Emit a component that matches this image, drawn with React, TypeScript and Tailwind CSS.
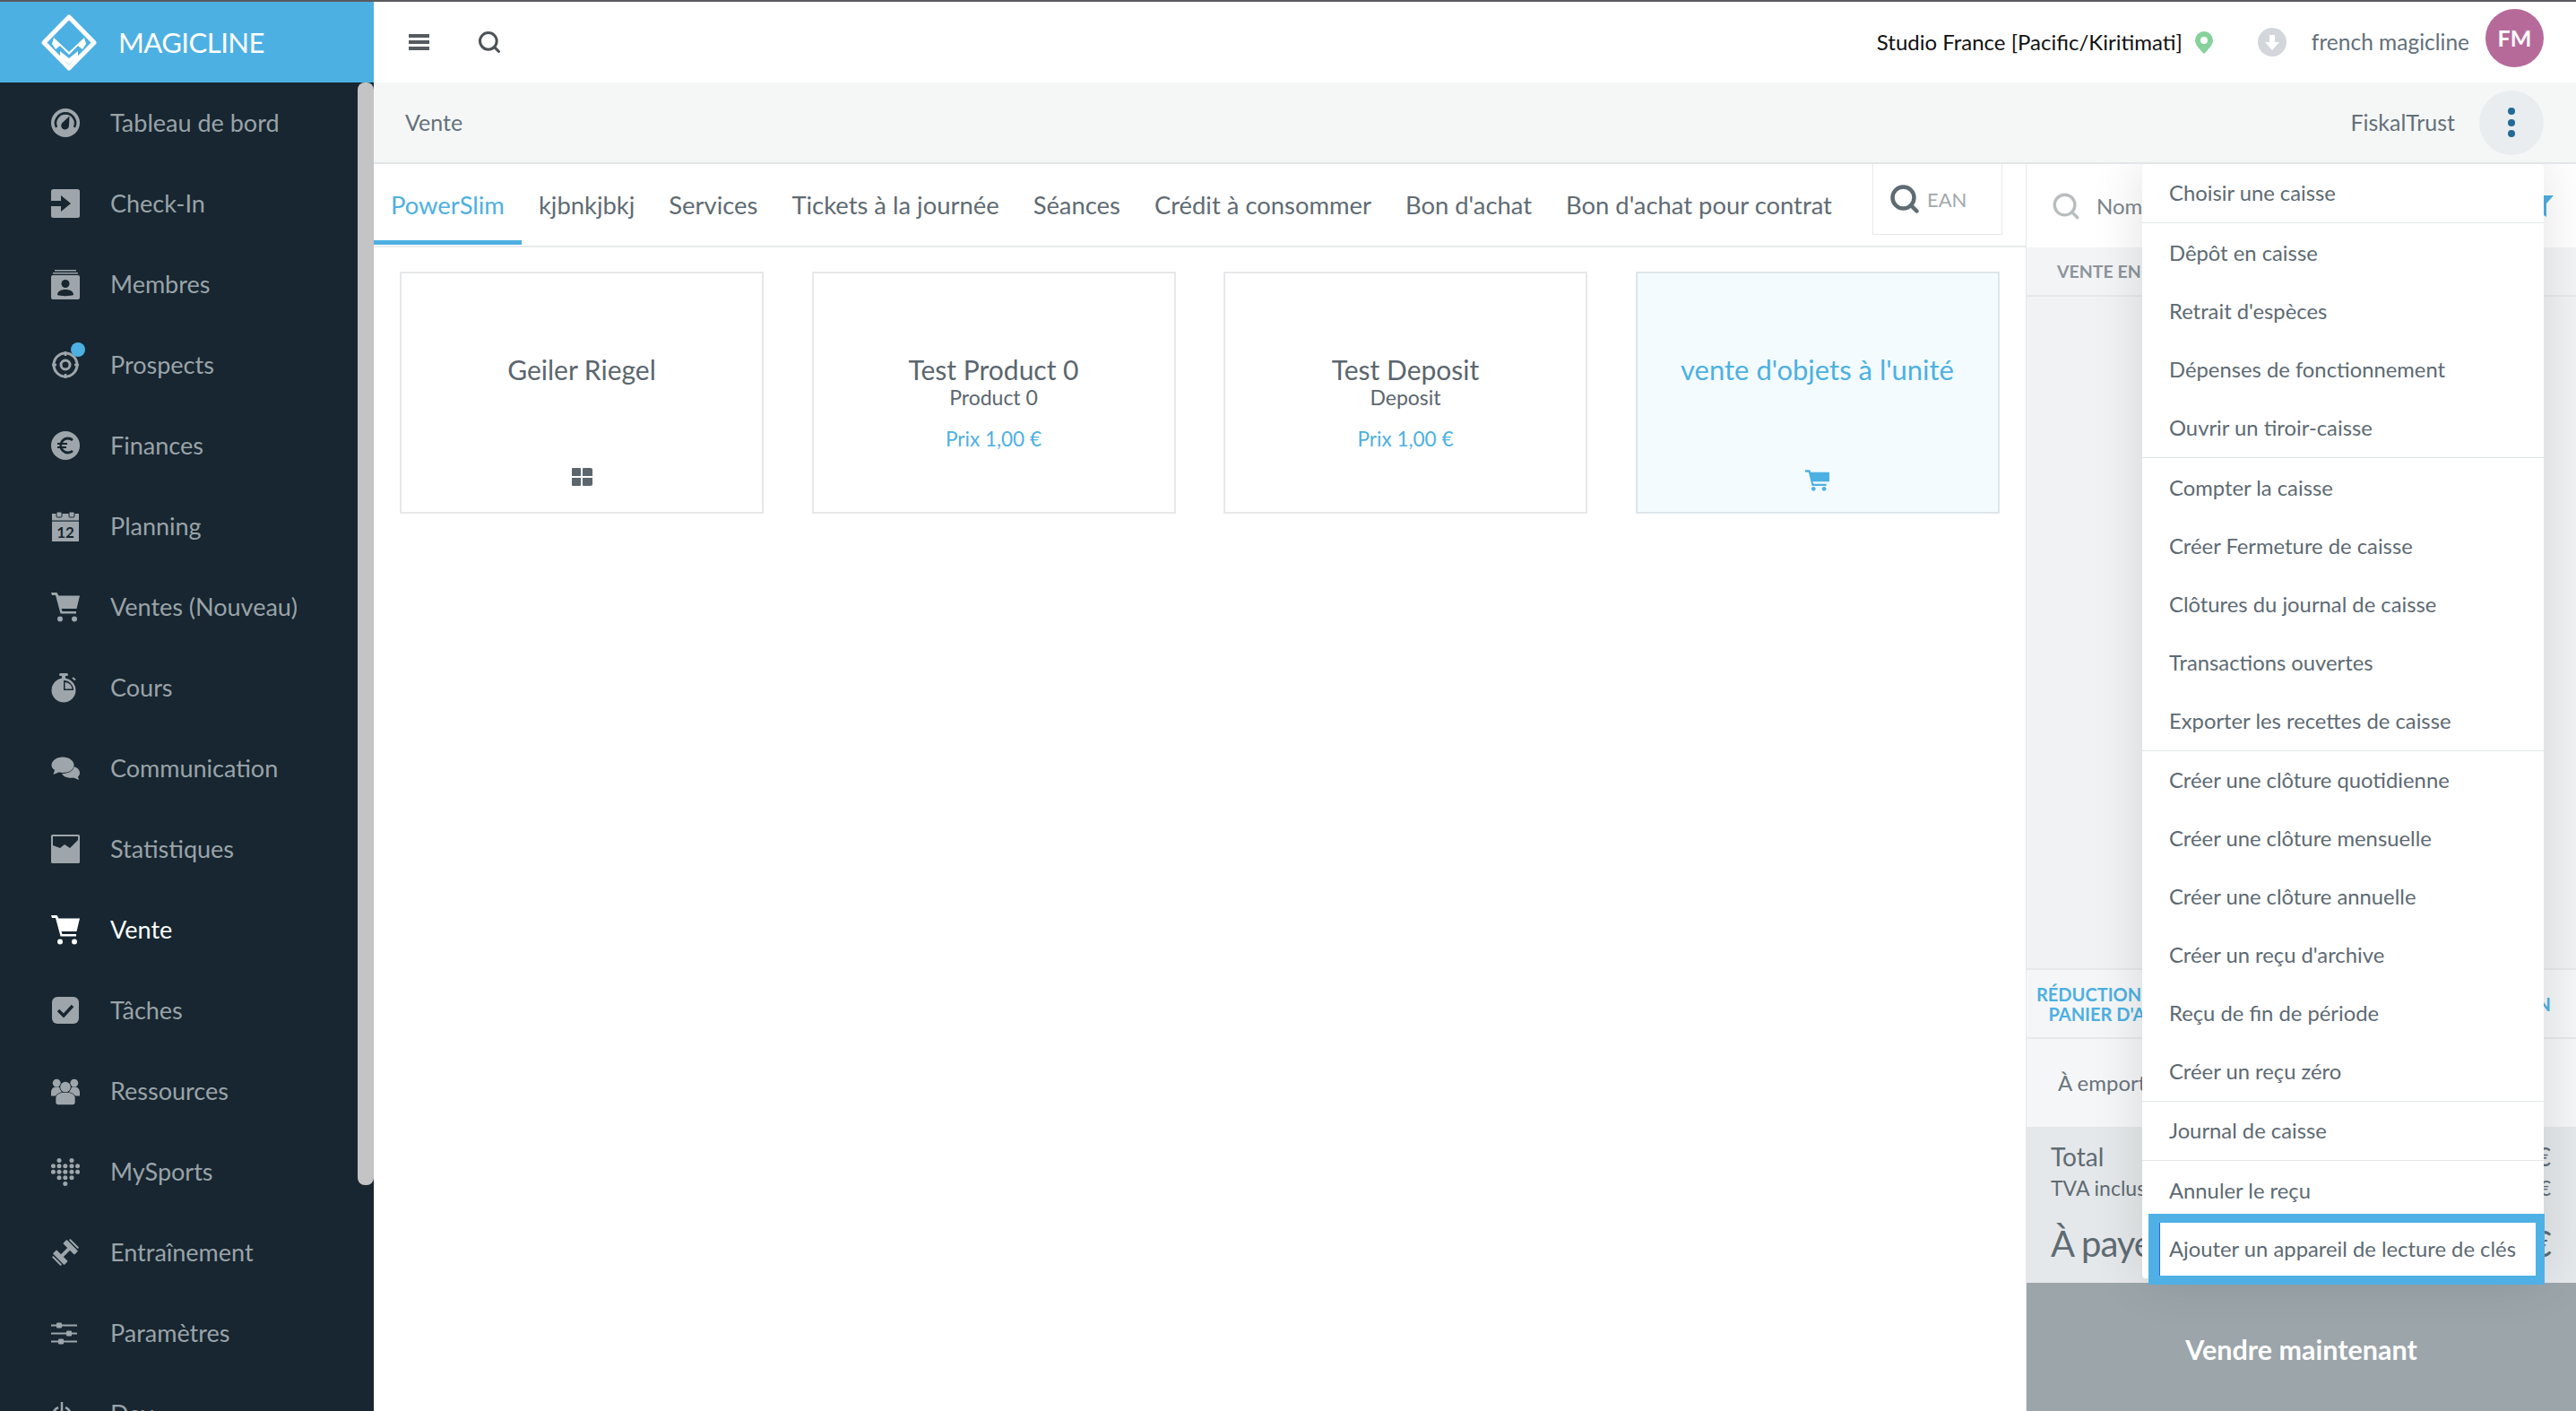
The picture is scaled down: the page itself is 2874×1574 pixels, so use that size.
import React from 'react';
import { Search } from 'lucide-react';

const GRAY = '#9ea6ab';
const DARK = '#172630';

const Logo = () => (
  <svg width="62" height="63" viewBox="0 0 62 63" className="shrink-0">
    <path d="M31 3 L59 31.5 L31 60 L3 31.5 Z" fill="none" stroke="#fff" strokeWidth="5" strokeLinejoin="round" />
    <path d="M14 26 L31 42 L48 26 L50 33 L46 39 L41 35 L31 45 L21 35 L16 39 L12 33 Z" fill="#fff" />
    <path d="M21 41 L31 49 L41 41 L41 47 L31 56 L21 47 Z" fill="#fff" />
  </svg>
);

const GaugeIcon = ({ c }: { c: string }) => (
  <svg viewBox="0 0 32 32" className="size-[32px]">
    <circle cx="16" cy="16" r="16" fill={c} />
    <path d="M6 21a11 11 0 1 1 20 0" fill="none" stroke={DARK} strokeWidth="2.6" />
    <path d="M20.5 8.5 L20 19 a4.4 4.4 0 1 1 -7.5 -3 z" fill={DARK} />
  </svg>
);
const CheckInIcon = ({ c }: { c: string }) => (
  <svg viewBox="0 0 32 32" className="size-[32px]">
    <rect width="32" height="32" rx="2.5" fill={c} />
    <path d="M0 13h11V7l11 9-11 9v-6H0z" fill={DARK} />
  </svg>
);
const MembersIcon = ({ c }: { c: string }) => (
  <svg viewBox="0 0 32 33" className="h-[33px] w-[32px]">
    <rect x="4" y="0" width="24" height="1.5" fill={c} />
    <rect x="2" y="3" width="28" height="1.5" fill={c} />
    <rect y="6" width="32" height="27" rx="2" fill={c} />
    <circle cx="16" cy="15.5" r="4.5" fill={DARK} />
    <path d="M7 28c0-4 4-6 9-6s9 2 9 6c-3 1.5-15 1.5-18 0z" fill={DARK} />
  </svg>
);
const ProspectIcon = ({ c }: { c: string }) => (
  <svg viewBox="0 0 32 32" className="size-[32px]">
    <circle cx="16" cy="16" r="13" fill="none" stroke={c} strokeWidth="3" />
    <circle cx="16" cy="16" r="5" fill="none" stroke={c} strokeWidth="3" />
    <path d="M16 1v5M16 26v5M1 16h5M26 16h5" stroke={c} strokeWidth="2.5" />
  </svg>
);
const EuroIcon = ({ c }: { c: string }) => (
  <svg viewBox="0 0 32 32" className="size-[32px]">
    <circle cx="16" cy="16" r="16" fill={c} />
    <path d="M24 10a8 8 0 1 0 0 12" fill="none" stroke={DARK} strokeWidth="2.8" />
    <path d="M7 14h11M7 18h10" stroke={DARK} strokeWidth="2.2" />
  </svg>
);
const CalendarIcon = ({ c }: { c: string }) => (
  <svg viewBox="0 0 32 33" className="h-[33px] w-[32px]">
    <rect x="1" y="2" width="30" height="31" fill={c} />
    <rect x="1" y="9.5" width="30" height="1.2" fill={DARK} />
    <rect x="6" y="0" width="6" height="6" rx="1" fill={c} stroke={DARK} strokeWidth="1" />
    <rect x="20" y="0" width="6" height="6" rx="1" fill={c} stroke={DARK} strokeWidth="1" />
    <text x="16" y="29" textAnchor="middle" fontSize="17" fontWeight="700" fontFamily="Lato" fill={DARK}>12</text>
  </svg>
);
const CartIcon = ({ c }: { c: string }) => (
  <svg viewBox="0 0 32 33" className="h-[33px] w-[32px]">
    <path d="M0 0h6.5l2 3.5H32l-3.5 14.5h-17l1 3H28v2.5H10.5L5 3H1z" fill={c} />
    <circle cx="10" cy="29.5" r="3" fill={c} />
    <circle cx="26" cy="29.5" r="3" fill={c} />
  </svg>
);
const WatchIcon = ({ c }: { c: string }) => (
  <svg viewBox="0 0 32 33" className="h-[33px] w-[32px]">
    <rect x="9" y="0" width="10" height="3" rx="1.5" fill={c} />
    <rect x="12" y="2" width="4" height="4" fill={c} />
    <circle cx="14" cy="19" r="13.5" fill={c} />
    <path d="M14 19V8a11 11 0 0 1 11 11z" fill={DARK} />
    <path d="M15.5 17.5V10a9 9 0 0 1 8 7.5z" fill={c} />
    <path d="M24 5l3 2.5" stroke={c} strokeWidth="2" />
  </svg>
);
const ChatIcon = ({ c }: { c: string }) => (
  <svg viewBox="0 0 32 26" className="h-[26px] w-[32px]">
    <path d="M19 10c7 0 13 3 13 8 0 2-1 3.5-2 4.5l1 3.5-6-2.5c-6 1-13-1-13-6 0-4 3-7.5 7-7.5z" fill={c} />
    <path d="M13 0c7 0 13 4 13 9.5S20 19 13 19c-1.5 0-3-.2-4.5-.5L2.5 21l1.5-5C1.5 14 0 12 0 9.5 0 4 6 0 13 0z" fill={DARK} />
    <path d="M13 .5c7 0 12.5 4 12.5 9s-5.5 8.5-12.5 8.5c-1.5 0-3-.2-4.5-.5L2.5 20l1.5-5C1.5 13.5.5 11.5.5 9.5.5 4.5 6 .5 13 .5z" fill={c} />
  </svg>
);
const ChartIcon = ({ c }: { c: string }) => (
  <svg viewBox="0 0 32 32" className="size-[32px]">
    <rect width="32" height="32" rx="1.5" fill={c} />
    <path d="M2 2h28v4l-9 9-6-4-5 4-8-3z" fill={DARK} />
  </svg>
);
const TaskIcon = ({ c }: { c: string }) => (
  <svg viewBox="0 0 32 32" className="size-[32px]">
    <rect x="1" y="1" width="30" height="30" rx="6" fill={c} />
    <path d="M8 16l6 6 10-11" fill="none" stroke={DARK} strokeWidth="3.5" />
  </svg>
);
const GroupIcon = ({ c }: { c: string }) => (
  <svg viewBox="0 0 36 33" className="h-[33px] w-[36px]">
    <circle cx="7" cy="6" r="5" fill={c} />
    <circle cx="29" cy="6" r="5" fill={c} />
    <path d="M0 18c0-5 3-7 7-7s7 2 7 7v4H0zM22 18c0-5 3-7 7-7s7 2 7 7v4H22z" fill={c} />
    <circle cx="18" cy="11" r="7.5" fill={DARK} />
    <circle cx="18" cy="11" r="6.5" fill={c} />
    <path d="M5 33V25c0-5 5-8 13-8s13 3 13 8v8z" fill={DARK} />
    <path d="M6 30V25c0-5 5-7 12-7s12 2 12 7v5c0 2-1 3-3 3H9c-2 0-3-1-3-3z" fill={c} />
  </svg>
);
const HeartDots = ({ c }: { c: string }) => {
  const rows: [number, number[]][] = [
    [3, [9.3, 23.7]],
    [9.5, [2.5, 9.3, 16.3, 23.7, 30.5]],
    [16.3, [2.5, 9.3, 16.3, 23.7, 30.5]],
    [23, [9.3, 16.3, 23.7]],
    [30, [16.3]],
  ];
  return (
    <svg viewBox="0 0 33 33" className="h-[33px] w-[33px]">
      {rows.map(([y, xs]) => xs.map((x) => <circle key={`${x}-${y}`} cx={x} cy={y} r="2.6" fill={c} />))}
    </svg>
  );
};
const DumbbellIcon = ({ c }: { c: string }) => (
  <svg viewBox="0 0 32 32" className="size-[32px]">
    <g transform="rotate(-45 16 16)" fill={c}>
      <rect x="7" y="14" width="18" height="4" />
      <rect x="21" y="7" width="6" height="18" rx="1" />
      <rect x="28.5" y="9" width="2" height="14" rx="1" />
      <rect x="5" y="7" width="6" height="18" rx="1" />
      <rect x="1.5" y="9" width="2" height="14" rx="1" />
    </g>
  </svg>
);
const SlidersIcon = ({ c }: { c: string }) => (
  <svg viewBox="0 0 29 26" className="h-[26px] w-[29px]">
    <path d="M0 4.5h29M0 13.5h29M0 22.5h29" stroke={c} strokeWidth="2" />
    <rect x="6" y="1.5" width="6" height="6" rx="1" fill={c} />
    <rect x="17" y="10.5" width="6" height="6" rx="1" fill={c} />
    <rect x="8" y="19.5" width="6" height="6" rx="1" fill={c} />
  </svg>
);
const PowerIcon = ({ c }: { c: string }) => (
  <svg viewBox="0 0 24 26" className="h-[26px] w-[24px]">
    <path d="M8 6a10 10 0 1 0 8 0" fill="none" stroke={c} strokeWidth="2.5" />
    <path d="M12 0v10" stroke={c} strokeWidth="2.5" />
  </svg>
);

const NAV = [
  { label: 'Tableau de bord', icon: GaugeIcon },
  { label: 'Check-In', icon: CheckInIcon },
  { label: 'Membres', icon: MembersIcon },
  { label: 'Prospects', icon: ProspectIcon, dot: true },
  { label: 'Finances', icon: EuroIcon },
  { label: 'Planning', icon: CalendarIcon },
  { label: 'Ventes (Nouveau)', icon: CartIcon },
  { label: 'Cours', icon: WatchIcon },
  { label: 'Communication', icon: ChatIcon },
  { label: 'Statistiques', icon: ChartIcon },
  { label: 'Vente', icon: CartIcon, active: true },
  { label: 'Tâches', icon: TaskIcon },
  { label: 'Ressources', icon: GroupIcon },
  { label: 'MySports', icon: HeartDots },
  { label: 'Entraînement', icon: DumbbellIcon },
  { label: 'Paramètres', icon: SlidersIcon },
  { label: 'Dev', icon: PowerIcon },
];

const TABS = [
  'PowerSlim',
  'kjbnkjbkj',
  'Services',
  'Tickets à la journée',
  'Séances',
  'Crédit à consommer',
  "Bon d'achat",
  "Bon d'achat pour contrat",
];

const MENU = [
  ['Choisir une caisse'],
  ['Dêpôt en caisse', "Retrait d'espèces", 'Dépenses de fonctionnement', 'Ouvrir un tiroir-caisse'],
  ['Compter la caisse', 'Créer Fermeture de caisse', 'Clôtures du journal de caisse', 'Transactions ouvertes', 'Exporter les recettes de caisse'],
  ['Créer une clôture quotidienne', 'Créer une clôture mensuelle', 'Créer une clôture annuelle', "Créer un reçu d'archive", 'Reçu de fin de période', 'Créer un reçu zéro'],
  ['Journal de caisse'],
  ['Annuler le reçu'],
];

const Sidebar = () => (
  <aside className="w-[417px] shrink-0 flex flex-col bg-[#172630] overflow-hidden">
    <div className="h-[90px] shrink-0 flex items-center pl-[46px] gap-[24px] bg-[#4db0e2]">
      <Logo />
      <span className="text-[31px] tracking-[-0.5px] text-white">MAGICLINE</span>
    </div>
    <nav className="relative flex-1 overflow-hidden">
      {NAV.map(({ label, icon: Icon, dot, active }) => (
        <div key={label} className="h-[90px] flex items-center pl-[57px]">
          <div className="relative w-[32px] flex justify-start">
            <Icon c={active ? '#ffffff' : GRAY} />
            {dot && <span className="absolute -top-[9px] left-[22px] size-[16px] rounded-full bg-[#4db0e2]" />}
          </div>
          <span className={`ml-[34px] text-[27px] ${active ? 'text-white' : 'text-[#9aa3a9]'}`}>{label}</span>
        </div>
      ))}
      <div className="absolute right-0 top-0 w-[18px] h-[1230px] rounded-[8px] bg-[#c4c4c4]" />
    </nav>
  </aside>
);

const TopBar = () => (
  <header className="h-[90px] shrink-0 flex items-center bg-white pl-[39px] pr-[36px]">
    <svg width="23" height="18" viewBox="0 0 23 18" className="shrink-0">
      <path d="M0 0h23v4H0zM0 7h23v4H0zM0 14h23v4H0z" fill="#555b60" />
    </svg>
    <Search className="ml-[53px] size-[28px] text-[#4c5256]" strokeWidth={2.6} />
    <span className="ml-auto text-[24px] text-[#111]">Studio France [Pacific/Kiritimati]</span>
    <svg width="20" height="25" viewBox="0 0 20 25" className="ml-[14px] shrink-0">
      <path fillRule="evenodd" d="M10 0a10 10 0 0 1 10 10c0 5-6 11-10 15C6 21 0 15 0 10A10 10 0 0 1 10 0zm0 6a4 4 0 1 0 0 8 4 4 0 0 0 0-8z" fill="#86d29a" />
    </svg>
    <svg width="32" height="32" viewBox="0 0 32 32" className="ml-[50px] shrink-0">
      <circle cx="16" cy="16" r="16" fill="#d3d6da" />
      <path d="M13 8h6v8h5l-8 9-8-9h5z" fill="#fff" />
    </svg>
    <span className="ml-[28px] text-[24.5px] text-[#62707a]">french magicline</span>
    <span className="ml-[18px] size-[65px] -mt-[9px] rounded-full bg-[#b66a9a] flex items-center justify-center text-white font-bold text-[25px]">FM</span>
  </header>
);

const Breadcrumb = () => (
  <div className="h-[91px] shrink-0 flex items-center bg-[#f5f7f7] border-b-2 border-[#e2e6e9] pl-[35px] pr-[36px]">
    <span className="text-[25px] text-[#64707a]">Vente</span>
    <span className="ml-auto text-[25px] text-[#64707a]">FiskalTrust</span>
    <span className="ml-[27px] size-[72px] rounded-full bg-[#e9edef] flex flex-col items-center justify-center gap-[4.5px]">
      <i className="size-[8px] rounded-full bg-[#236a96]" />
      <i className="size-[8px] rounded-full bg-[#236a96]" />
      <i className="size-[8px] rounded-full bg-[#236a96]" />
    </span>
  </div>
);

const Tabs = () => (
  <div className="h-[93px] shrink-0 flex border-b-2 border-[#e8eaec] pb-[1px]">
    <div className="w-[1669px] flex">
      {TABS.map((t, i) => (
        <div
          key={t}
          className={`h-full flex items-center pt-[6px] px-[19px] text-[27.4px] border-b-[5px] ${
            i === 0 ? 'text-[#4db0e2] border-[#4db0e2]' : 'text-[#5f6b73] border-transparent'
          }`}
        >
          {t}
        </div>
      ))}
    </div>
    <div className="w-[145px] h-[79px] ml-auto mr-[26px] flex items-center pl-[17px] border-x border-b border-[#e6e8ea]">
      <Search className="size-[36px] text-[#5f6b73]" strokeWidth={3} />
      <span className="ml-[7px] text-[22px] text-[#a3a8ac]">EAN</span>
    </div>
  </div>
);

const Card = ({ title, sub, price, children, tinted }: { title: string; sub?: string; price?: string; children?: React.ReactNode; tinted?: boolean }) => (
  <div className={`w-[406px] h-[270px] border-2 flex flex-col items-center pt-[88px] ${tinted ? 'bg-[#f3fbfe] border-[#dfe6ea] text-[#4db0e2]' : 'border-[#e6e8ea] text-[#5b666e]'}`}>
    <div className={`leading-[38px] ${tinted ? 'text-[31px]' : 'text-[30px]'}`}>{title}</div>
    {sub && <div className="text-[23px] leading-[28px] -mt-[2px]">{sub}</div>}
    {price && <div className="mt-[18px] text-[22.5px] leading-[30px] text-[#4db0e2]">{price}</div>}
    {children && <div className={`mt-auto ${tinted ? 'mb-[23px]' : 'mb-[29px]'}`}>{children}</div>}
  </div>
);

const Products = () => (
  <div className="flex-1 flex items-start gap-[53.5px] pt-[27px] pl-[29px]">
    <Card title="Geiler Riegel">
      <svg width="24" height="20" viewBox="0 0 24 20" className="block">
        <path d="M2 0h8a1 1 0 0 1 1 1v8H1V1a1 1 0 0 1 1-1zM14 0h8a2 2 0 0 1 2 2v7H13V1a1 1 0 0 1 1-1zM1 11h10v8a1 1 0 0 1-1 1H2a1 1 0 0 1-1-1zM13 11h11v7a2 2 0 0 1-2 2h-8a1 1 0 0 1-1-1z" fill="#5b666e" />
      </svg>
    </Card>
    <Card title="Test Product 0" sub="Product 0" price="Prix 1,00 €" />
    <Card title="Test Deposit" sub="Deposit" price="Prix 1,00 €" />
    <Card title="vente d'objets à l'unité" tinted>
      <svg width="27" height="24" viewBox="0 0 32 28" className="block">
        <path d="M0 0h6l1.5 3H32v12.5H10l1 3h17v2.5H9L4.500 3H0z" fill="#4db0e2" />
        <circle cx="11" cy="25" r="2.8" fill="#4db0e2" />
        <circle cx="25" cy="25" r="2.8" fill="#4db0e2" />
      </svg>
    </Card>
  </div>
);

const Dropdown = () => (
  <div className="absolute left-[129px] top-0 w-[448px] rounded-[4px] bg-white shadow-[0_0_60px_rgba(0,0,0,0.12)] text-[23.8px] text-[#5d6a73]">
    {MENU.map((group, g) => (
      <div key={g} className={g === 0 ? '' : g === 1 || g === 2 || g === 5 ? 'border-t border-[#e3e7e9] pt-[1px]' : 'border-t border-[#e3e7e9]'}>
        {group.map((item) => (
          <div key={item} className="h-[65px] flex items-center pl-[30px]">
            {item}
          </div>
        ))}
      </div>
    ))}
    <div className="relative h-[65px] flex items-center pl-[30px]">
      Ajouter un appareil de lecture de clés
      <span className="absolute -top-[7px] -bottom-[7px] left-[7px] -right-[1px] border-[10px] border-l-[12px] border-[#4fb0e6] shadow-[inset_1px_0_0_#2f62e8]" />
    </div>
  </div>
);

const SalePanel = () => (
  <section className="relative w-[614px] shrink-0 flex flex-col border-l border-[#e6e8ea] overflow-hidden">
    <div className="h-[93px] shrink-0 flex items-center pl-[27px] pr-[25px] bg-white">
      <Search className="size-[34px] text-[#b8bdbe]" strokeWidth={2.4} />
      <span className="ml-[17px] text-[24px] text-[#7d868c]">Nom</span>
      <svg width="24" height="24" viewBox="0 0 24 24" className="ml-auto">
        <path d="M0 0h24l-8 9v15l-6-4V9z" fill="#4db0e2" />
      </svg>
    </div>
    <div className="h-[55px] shrink-0 flex items-center pl-[34px] bg-[#f3f4f6] border-b-2 border-[#e6e8ea] text-[19.5px] font-bold text-[#8d949a]">VENTE EN COURS</div>
    <div className="flex-1 bg-[#f0f2f4]" />
    <div className="h-[79px] shrink-0 flex items-center justify-between pl-[11px] pr-[28px] bg-[#f5f6f8] border-y-2 border-[#e6e8ea] text-[20px] font-bold text-[#4db0e2] leading-[22px]">
      <div className="text-center">RÉDUCTION SUR LE<br />PANIER D'ACHAT</div>
      <div>RÉDUCTION</div>
    </div>
    <div className="h-[98px] shrink-0 flex items-center pl-[35px] bg-[#f4f6f8] text-[24px] text-[#6a757d]">À emporter</div>
    <div className="h-[174px] shrink-0 flex flex-col pl-[27px] pr-[28px] pt-[15px] bg-[#e5e8ea] text-[#5f6b73]">
      <div className="flex justify-between text-[28px] leading-[36px]"><span>Total</span><span>0,00 €</span></div>
      <div className="flex justify-between text-[23px] leading-[30px] mt-[2px]"><span>TVA incluse</span><span>0,00 €</span></div>
      <div className="flex justify-between text-[40px] tracking-[-1px] leading-[54px] mt-[20px]"><span>À payer</span><span>0,00 €</span></div>
    </div>
    <div className="h-[143px] shrink-0 flex items-center justify-center pt-[6px] bg-[#9ba5aa] text-[30.5px] font-bold text-white">Vendre maintenant</div>
    <Dropdown />
  </section>
);

export default function App() {
  return (
    <div className="w-[2874px] h-[1574px] overflow-hidden flex flex-col border-t-2 border-[#5a5a60] bg-white font-['Lato',sans-serif]">
      <div className="flex-1 flex min-h-0">
        <Sidebar />
        <main className="flex-1 flex flex-col min-w-0">
          <TopBar />
          <Breadcrumb />
          <div className="flex-1 flex min-h-0">
            <div className="flex-1 flex flex-col min-w-0">
              <Tabs />
              <Products />
            </div>
            <SalePanel />
          </div>
        </main>
      </div>
    </div>
  );
}
